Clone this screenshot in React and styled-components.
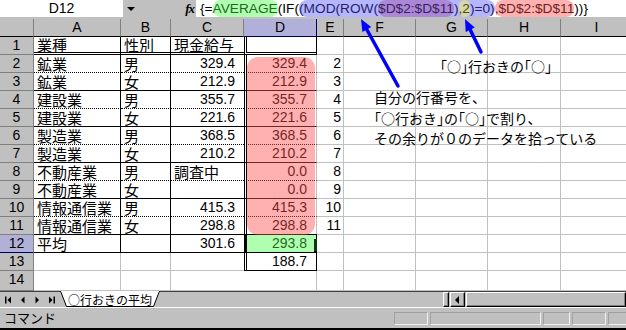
import React from 'react';
import styled, { createGlobalStyle, css } from 'styled-components';

const GlobalStyle = createGlobalStyle`
  html, body { margin: 0; padding: 0; background: #c0c0c0; }
  body {
    width: 626px; height: 330px; overflow: hidden;
    font-family: "Liberation Sans", "Noto Sans CJK JP", sans-serif;
  }
`;

const cjk = `"Noto Sans CJK JP", "Liberation Sans", sans-serif`;

const Window = styled.div`
  position: relative;
  width: 626px;
  height: 330px;
  display: flex;
  flex-direction: column;
  background: #c0c0c0;
  overflow: hidden;
`;

/* ---------- formula bar ---------- */
const FormulaBar = styled.div`
  display: flex;
  align-items: flex-start;
  height: 19px;
  flex: none;
`;
const NameBox = styled.div`
  width: 123px;
  height: 17px;
  background: #fff;
  font-size: 14px;
  line-height: 17px;
  text-align: center;
`;
const ButtonZone = styled.div`
  width: 73px;
  height: 17px;
  box-sizing: border-box;
  padding: 0 2px 0 4px;
  display: flex;
  align-items: center;
  justify-content: space-between;
`;
const DropArrow = styled.span`
  width: 0;
  height: 0;
  border-left: 4px solid transparent;
  border-right: 4px solid transparent;
  border-top: 4px solid #000;
  margin-top: 1px;
`;
const Fx = styled.span`
  font-family: "Liberation Serif", serif;
  font-style: italic;
  font-weight: bold;
  font-size: 13px;
  line-height: 15px;
  letter-spacing: -1px;
`;
const FormulaText = styled.div`
  flex: 1;
  height: 17px;
  background: #fff;
  padding-left: 4px;
  font-size: 13.7px;
  line-height: 17px;
  white-space: nowrap;
  overflow: hidden;
`;
const tones = {
  green: ['rgba(80,255,80,0.45)', '#1f6a1f'],
  blue: ['rgba(80,80,255,0.42)', '#1f1f6a'],
  purple: ['rgba(150,60,150,0.38)', '#3a1f5a'],
  khaki: ['rgba(255,255,60,0.45)', '#4a4a1f'],
  pink: ['rgba(255,80,80,0.45)', '#6a1f1f'],
};
const Bubble = styled.span`
  background: ${p => tones[p.$tone][0]};
  color: ${p => tones[p.$tone][1]};
  border-radius: 8px;
  padding: 1px 0;
`;

/* ---------- sheet ---------- */
const Sheet = styled.div`
  position: relative;
  flex: none;
  display: grid;
  grid-template-columns: 34px 87px 50px 73px 73px 27px 72px 72px 73px 72px;
  grid-template-rows: repeat(14, 18px) 20px;
  width: 633px;
  background: #fff;
`;

const headBase = css`
  box-sizing: border-box;
  background: #c0c0c0;
  border-right: 1px solid #808080;
  border-bottom: 1px solid #808080;
  font-size: 14px;
  line-height: 17px;
  text-align: center;
  color: #000;
`;
const ColHead = styled.div`
  ${headBase};
  border-bottom-color: #000;
  ${p => p.$active && css`
    background: #b0b0d8;
    border-right-color: #000060;
    border-bottom-color: #000060;
  `}
`;
const RowHead = styled.div`
  ${headBase};
  ${p => p.$active && css`
    background: #b0b0d8;
    border-bottom-color: #000060;
  `}
`;

const borderValue = t => {
  switch (t) {
    case 'solid': return '1px solid #000';
    case 'dotted': return '1px dotted #000';
    case 'double': return '3px double #000';
    case 'none': return '0';
    default: return '1px solid #c0c0c0';
  }
};

const Cell = styled.div`
  position: relative;
  box-sizing: border-box;
  background: #fff;
  border-right: ${p => borderValue(p.$br)};
  border-bottom: ${p => borderValue(p.$bb)};
  border-left: ${p => (p.$bl ? borderValue(p.$bl) : '0')};
  padding: ${p => (p.$align === 'right' ? `0 ${p.$pr ?? 2}px 0 0` : '0 0 0 3px')};
  display: flex;
  align-items: center;
  justify-content: ${p => (p.$align === 'right' ? 'flex-end' : 'flex-start')};
  font-size: ${p => (p.$num ? '14px' : '15px')};
  line-height: 15px;
  font-family: ${p => (p.$num ? `"Liberation Sans", sans-serif` : cjk)};
  white-space: nowrap;
  color: #000;
  ${p => p.$selected && css`
    background: #b0ffb0;
    color: #1f6a1f;
  `}
`;

const SelectFrame = styled.div`
  position: absolute;
  left: -2px;
  top: -1px;
  right: -1px;
  bottom: -2px;
  border: 1px solid #000;
  pointer-events: none;
  &::before {
    content: "";
    position: absolute;
    right: -1px;
    top: 4px;
    bottom: 0;
    width: 3px;
    background: #0a3a0a;
  }
  &::after {
    content: "";
    position: absolute;
    right: -3px;
    bottom: -3px;
    width: 5px;
    height: 5px;
    background: #000;
  }
`;

const PinkWash = styled.div`
  position: absolute;
  left: 247px;
  top: 38px;
  width: 68px;
  height: 178px;
  border-radius: 11px;
  background: rgba(255, 80, 80, 0.45);
  pointer-events: none;
`;

const Note = styled.div`
  position: absolute;
  left: ${p => p.$x}px;
  top: ${p => p.$y}px;
  font-family: ${cjk};
  font-size: 14px;
  line-height: 20.5px;
  white-space: nowrap;
  color: #000;
`;
const Bracket = styled.span`
  font-feature-settings: "halt" 1;
`;

/* ---------- arrows ---------- */
const ArrowLayer = styled.svg`
  position: absolute;
  left: 0;
  top: 0;
  pointer-events: none;
`;

/* ---------- tab bar ---------- */
const TabBar = styled.div`
  flex: none;
  height: 15px;
  display: flex;
  align-items: stretch;
  border-top: 1px solid #404040;
`;
const NavGroup = styled.div`
  width: 60px;
  display: flex;
  align-items: center;
  justify-content: space-around;
  padding: 0 2px;
  box-sizing: border-box;
`;
const Tab = styled.div`
  position: relative;
  width: 100px;
  display: flex;
  justify-content: center;
  align-items: center;
  font-family: ${cjk};
  font-size: 12px;
  line-height: 14px;
  & > span {
    position: relative;
    text-decoration: underline;
    text-underline-offset: 1px;
  }
`;
const TabShape = styled.svg`
  position: absolute;
  left: 0;
  top: -1px;
`;
const Spacer = styled.div`
  flex: 1;
`;
const raised = css`
  box-sizing: border-box;
  background: #c0c0c0;
  border: 1px solid;
  border-color: #fff #000 #000 #fff;
  box-shadow: inset -1px -1px #808080;
`;
const SplitBox = styled.div`
  ${raised};
  width: 6px;
  margin-right: 1px;
`;
const ScrollButton = styled.div`
  ${raised};
  width: 15px;
  display: flex;
  align-items: center;
  justify-content: center;
  margin-right: 1px;
`;
const ScrollThumb = styled.div`
  ${raised};
  width: 160px;
`;

/* ---------- status bar ---------- */
const StatusBar = styled.div`
  flex: none;
  box-sizing: border-box;
  border-top: 1px solid #fff;
  border-bottom: 3px solid #000;
  height: 24px;
  display: flex;
  align-items: center;
  padding-left: 4px;
  font-family: ${cjk};
  font-size: 13px;
  line-height: 16px;
`;
const StatusLabel = styled.div`
  flex: 1;
`;
const Panels = styled.div`
  display: flex;
  gap: 2px;
  margin-right: -10px;
`;
const Panel = styled.div`
  width: ${p => p.$w}px;
  height: 13px;
  box-sizing: border-box;
  border: 1px solid;
  border-color: #a0a0a0 #f0f0f0 #f0f0f0 #a0a0a0;
`;

const Tri = ({ dir, bar }) => (
  <svg width="8" height="8" viewBox="0 0 8 8">
    {dir === 'left' ? (
      <>
        {bar && <rect x="0" y="0.5" width="1.5" height="7" fill="#000" />}
        <polygon points={bar ? '6,0.5 2.5,4 6,7.5' : '5.5,0.5 2,4 5.5,7.5'} fill="#000" />
      </>
    ) : (
      <>
        <polygon points={bar ? '2,0.5 5.5,4 2,7.5' : '2.5,0.5 6,4 2.5,7.5'} fill="#000" />
        {bar && <rect x="6.5" y="0.5" width="1.5" height="7" fill="#000" />}
      </>
    )}
  </svg>
);

const data = [
  ['業種', '性別', '現金給与', ''],
  ['鉱業', '男', '329.4', '329.4'],
  ['鉱業', '女', '212.9', '212.9'],
  ['建設業', '男', '355.7', '355.7'],
  ['建設業', '女', '221.6', '221.6'],
  ['製造業', '男', '368.5', '368.5'],
  ['製造業', '女', '210.2', '210.2'],
  ['不動産業', '男', '調査中', '0.0'],
  ['不動産業', '女', '', '0.0'],
  ['情報通信業', '男', '415.3', '415.3'],
  ['情報通信業', '女', '298.8', '298.8'],
  ['平均', '', '301.6', '293.8'],
  ['', '', '', '188.7'],
  ['', '', '', ''],
];

const bottomType = r => {
  if (r === 1) return 'double';
  if (r === 12) return 'solid';
  if (r > 12) return undefined;
  return r % 2 === 0 ? 'dotted' : 'solid';
};

const isNum = s => /^[0-9.]+$/.test(s);

const colLetters = ['A', 'B', 'C', 'D', 'E', 'F', 'G', 'H', 'I'];

function SheetRows() {
  const out = [];
  out.push(<ColHead key="corner" />);
  colLetters.forEach(c => out.push(<ColHead key={`h${c}`} $active={c === 'D'}>{c}</ColHead>));
  for (let r = 1; r <= 14; r++) {
    const row = data[r - 1];
    const inTable = r <= 12;
    const bb = inTable ? bottomType(r) : undefined;
    out.push(<RowHead key={`r${r}`} $active={r === 12}>{r}</RowHead>);
    [0, 1, 2].forEach(i => {
      const v = row[i];
      const num = isNum(v);
      let br;
      if (inTable) br = i === 2 ? 'none' : 'solid';
      else if (i === 2) br = 'none';
      out.push(
        <Cell key={`c${r}-${i}`} $bb={bb} $br={br} $align={num ? 'right' : 'left'} $num={num} $pr={9}>
          {v}
        </Cell>
      );
    });
    const dv = row[3];
    const dIn = r <= 13;
    out.push(
      <Cell
        key={`c${r}-3`}
        $bl={dIn ? 'double' : undefined}
        $bb={r === 13 ? 'solid' : bb}
        $br={r === 1 || r === 13 || r === 12 ? 'solid' : undefined}
        $align="right"
        $num
        $pr={9}
        $selected={r === 12}
      >
        {dv}
        {r === 12 && <SelectFrame />}
      </Cell>
    );
    out.push(
      <Cell key={`c${r}-4`} $align="right" $num $pr={2}>
        {r >= 2 && r <= 11 ? r : ''}
      </Cell>
    );
    [5, 6, 7, 8].forEach(i => out.push(<Cell key={`c${r}-${i}`} />));
  }
  return out;
}

export default function App() {
  return (
    <Window>
      <GlobalStyle />
      <FormulaBar>
        <NameBox>D12</NameBox>
        <ButtonZone>
          <DropArrow />
          <Fx>fx</Fx>
        </ButtonZone>
        <FormulaText>
          {'{='}
          <Bubble $tone="green">AVERAGE</Bubble>
          {'(IF('}
          <Bubble $tone="blue">
            {'(MOD(ROW('}
            <Bubble $tone="purple">$D$2:$D$11</Bubble>
            {')'}
            <Bubble $tone="khaki">,2</Bubble>
            {')=0)'}
          </Bubble>
          <Bubble $tone="pink">,$D$2:$D$11</Bubble>
          {'))}'}
        </FormulaText>
      </FormulaBar>

      <Sheet>
        <SheetRows />
        <PinkWash />
        <Note $x={440} $y={37}>
          <Bracket>「</Bracket>○<Bracket>」</Bracket>行おきの<Bracket>「</Bracket>○<Bracket>」</Bracket>
        </Note>
        <Note $x={374} $y={68}>
          <div>自分の行番号を、</div>
          <div>
            <Bracket>「</Bracket>○行おき<Bracket>」</Bracket>の<Bracket>「</Bracket>○<Bracket>」</Bracket>で割り、
          </div>
          <div>その余りが０のデータを拾っている</div>
        </Note>
      </Sheet>

      <TabBar>
        <NavGroup>
          <Tri dir="left" bar />
          <Tri dir="left" />
          <Tri dir="right" />
          <Tri dir="right" bar />
        </NavGroup>
        <Tab>
          <TabShape width="100" height="16" viewBox="0 0 100 16">
            <polygon points="0.5,0 6.5,15.5 93.5,15.5 99.5,0" fill="#fff" stroke="#000" strokeWidth="1" />
            <rect x="1" y="0" width="98" height="1" fill="#fff" />
          </TabShape>
          <span>○行おきの平均</span>
        </Tab>
        <Spacer />
        <SplitBox />
        <ScrollButton>
          <svg width="5" height="8" viewBox="0 0 5 8">
            <polygon points="4,0 0,4 4,8" fill="#000" />
          </svg>
        </ScrollButton>
        <ScrollThumb />
      </TabBar>

      <StatusBar>
        <StatusLabel>コマンド</StatusLabel>
        <Panels>
          <Panel $w={34} />
          <Panel $w={111} />
          <Panel $w={27} />
          <Panel $w={34} />
          <Panel $w={28} />
        </Panels>
      </StatusBar>

      <ArrowLayer width="626" height="330" viewBox="0 0 626 330">
        <g stroke="#0000ff" strokeWidth="3.5" strokeLinecap="round">
          <line x1="398" y1="86" x2="366.8" y2="29.5" />
          <line x1="481" y1="52" x2="470.2" y2="29.8" />
        </g>
        <g fill="#0000ff">
          <polygon points="361,19 371.2,27.1 362.4,31.9" />
          <polygon points="465,19 474.7,27.6 465.7,32" />
        </g>
      </ArrowLayer>
    </Window>
  );
}
